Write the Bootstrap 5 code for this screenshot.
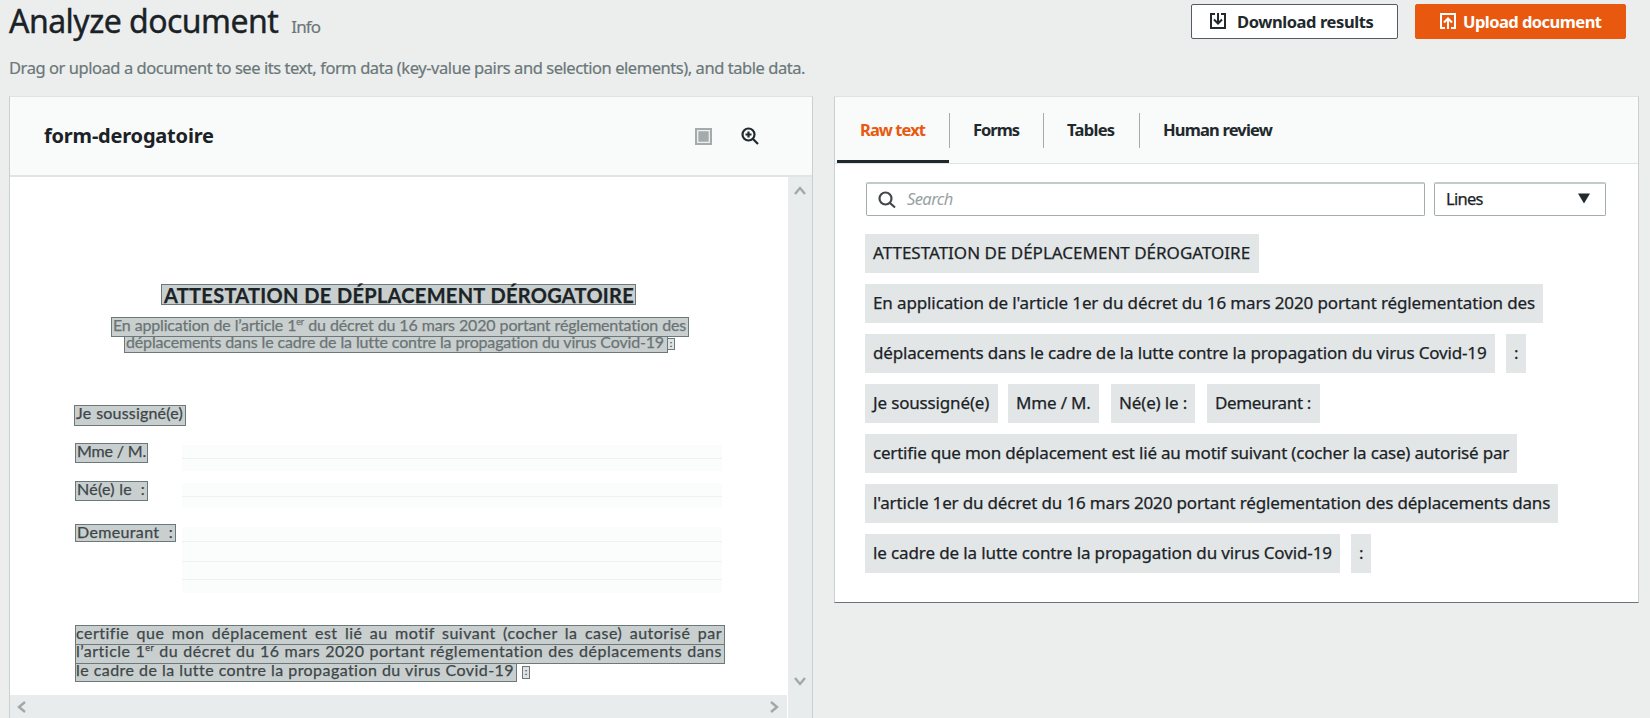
<!DOCTYPE html>
<html lang="en">
<head>
<meta charset="utf-8">
<title>Analyze document</title>
<link href="https://cdn.jsdelivr.net/npm/bootstrap@5.3.0/dist/css/bootstrap.min.css" rel="stylesheet">
<script src="https://cdn.jsdelivr.net/npm/bootstrap@5.3.0/dist/js/bootstrap.bundle.min.js"></script>
<style>
  body { background: #eceeee; color: #1b2226; font-family: "Noto Sans", sans-serif; font-size: 17px; height: 100vh; overflow: hidden; }
  .page-top { height: 54px; padding-left: 9px; padding-right: 24px; }
  .page-title { font-size: 32px; line-height: 41px; letter-spacing: -.52px; font-weight: 400; -webkit-text-stroke: .4px; }
  .info { font-size: 17px; line-height: 53px; letter-spacing: -.9px; color: #6b7778; margin-left: 13px; -webkit-text-stroke: .2px; }
  .intro { font-size: 16.5px; line-height: 26px; letter-spacing: -.445px; color: #6b7778; padding: 1px 0 0 9px; height: 42px; -webkit-text-stroke: .2px; }
  .act { height: 35px; margin-top: 4px; border-radius: 2px; font-size: 16.5px; font-weight: 700; padding: 0 0 1px; line-height: 31px; }
  .act-dl { width: 207px; background: #fff; border: 1px solid #545b64; color: #21292c; letter-spacing: -.42px; padding-left: 17px; }
  .act-up { width: 211px; background: #e8590f; border: 1px solid #e8590f; color: #fff; letter-spacing: -.54px; margin-left: 17px; padding-left: 23px; }

  .panels { gap: 21px; padding-left: 9px; }
  .panel { background: #fff; border: 1px solid #c9d0d0; border-top-color: #dfe3e3; }
  .panel-head { background: #f9fafa; border-bottom: 1px solid #e0e4e4; }
  .viewer { width: 804px; height: 622px; border-bottom: 0; }
  .viewer .panel-head { height: 80px; padding: 0 53px 0 34px; border-bottom-width: 2px; }
  .viewer h2 { font-size: 20px; font-weight: 700; letter-spacing: -.2px; line-height: 30px; }

  .canvas-col { width: 778px; }
  .scan { height: 518px; overflow: hidden; font-family: Lato, sans-serif; font-size: 16px; color: #3d4648; -webkit-text-stroke: .25px; }
  .hl { background: #c9cfcf; border: 1px solid #6d7878; line-height: 14px; white-space: nowrap; text-align: justify; text-align-last: justify; padding: 0 2px 0 1px; }
  .hl sup { font-size: 9px; line-height: 0; top: -6px; vertical-align: baseline; }
  .soft { color: #6b7475; }
  .dot { width: 8px; border: 1px solid #6d7878; background: #dfe3e3; font-size: 10px; line-height: 8px; text-align: center; color: #4c5556; }
  .scan-title { width: 475px; height: 21px; margin: 107px 0 0 151px; font-size: 20px; font-weight: 700; line-height: 20px; letter-spacing: .29px; color: #1c2326; padding-left: 2px; padding-right: 1px; }
  .sub1 { width: 578px; height: 20px; margin: 12px 0 0 101px; line-height: 13px; letter-spacing: -.19px; }
  .sub2 { width: 544px; height: 17px; line-height: 9px; letter-spacing: -.16px; padding-right: 3px; }
  .entry { margin-left: 65px; width: 647px; }
  .blank { width: 540px; margin-top: 2px; background: #fbfcfc; }
  .blank div { border-bottom: 1px solid #f0f2f2; }
  .para { width: 650px; height: 20px; margin-left: 65px; line-height: 13px; letter-spacing: .5px; padding-left: 0; }

  .hbar { height: 23px; background: #e9ecec; margin-right: 1px; padding: 0 8px 0 7px; }
  .vbar { width: 24px; height: 541px; background: #e9ecec; padding: 9px 0 32px; }

  .results { width: 805px; height: 507px; border-bottom-color: #69757a; }
  .results .panel-head { height: 67px; padding-left: 2px; }
  .tabs .nav-link { color: #21292c; font-size: 16.5px; font-weight: 700; line-height: 65px; padding: 0 23px; height: 66px; border: 0; border-bottom: 3px solid transparent; border-radius: 0; }
  .tabs .nav-link.active { color: #e8590f; border-bottom-color: #21292c; }
  .tabs .sep { width: 1px; height: 35px; background: #a3adad; margin-top: 16px; }
  .query { border: 1px solid #a3adad; border-top: 2px solid #c3caca; border-radius: 2px; height: 34px; background: #fff; font-size: 16.5px; line-height: 29px; padding-bottom: 2px; }
  .query-box { width: 559px; padding-left: 11px; }
  .query-box svg { margin-top: 2px; }
  .query-box span { font-style: italic; color: #98a1a2; margin-left: 11px; letter-spacing: -.6px; }
  .query-pick { width: 172px; padding-left: 11px; padding-right: 15px; letter-spacing: -.7px; -webkit-text-stroke: .25px; }
  .tokens { padding: 18px 0 0 30px; }
  .tok { background: #e2e6e6; height: 39px; line-height: 37px; padding-left: 8px; white-space: nowrap; letter-spacing: -.16px; -webkit-text-stroke: .25px; }
</style>
</head>
<body>
<header>
  <div class="page-top d-flex align-items-start">
    <h1 class="page-title mb-0">Analyze document</h1>
    <span class="info me-auto">Info</span>
    <button class="btn act act-dl d-flex align-items-center" type="button">
      <svg width="18" height="18" viewBox="0 0 18 18" fill="none" stroke="currentColor" stroke-width="2"><path d="M6 2H2v14h14V2h-4M9 1v10M5 7.5l4 4 4-4"/></svg>
      <span style="margin-left:10px">Download results</span>
    </button>
    <button class="btn act act-up d-flex align-items-center" type="button">
      <svg width="18" height="18" viewBox="0 0 18 18" fill="none" stroke="currentColor" stroke-width="2"><path d="M6 16H2V2h14v14h-4M9 17V7M5 10.5l4-4 4 4"/></svg>
      <span style="margin-left:6px">Upload document</span>
    </button>
  </div>
  <p class="intro mb-0">Drag or upload a document to see its text, form data (key-value pairs and selection elements), and table data.</p>
</header>

<main class="panels d-flex align-items-start">
  <section class="panel viewer flex-shrink-0">
    <div class="panel-head d-flex align-items-center">
      <h2 class="mb-0 me-auto">form-derogatoire</h2>
      <svg width="17" height="17" viewBox="0 0 17 17"><path fill="#a3abab" d="M0 0h17v17H0z"/><path fill="none" stroke="#eef0f0" stroke-width="1.3" d="M2.7 2.7h11.6v11.6H2.7z"/></svg>
      <svg style="margin-left:29px" width="18" height="18" viewBox="0 0 18 18" fill="none" stroke="#21292c" stroke-width="2.2"><circle cx="7.5" cy="7.5" r="6"/><path d="M12 12l5 5M4.5 7.5h6M7.5 4.5v6"/></svg>
    </div>
    <div class="d-flex">
      <div class="canvas-col">
        <div class="scan" lang="fr">
          <div class="hl scan-title">ATTESTATION DE DÉPLACEMENT DÉROGATOIRE</div>
          <div class="hl soft sub1">En application de l’article 1<sup>er</sup> du décret du 16 mars 2020 portant réglementation des</div>
          <div class="d-flex" style="margin:-1px 0 0 114px">
            <div class="hl soft sub2">déplacements dans le cadre de la lutte contre la propagation du virus Covid-19</div>
            <div class="dot" style="height:12px;margin:2px 0 0 -1px">:</div>
          </div>
          <div class="hl" style="width:112px;height:21px;margin:52px 0 0 64px;letter-spacing:.2px">Je soussigné(e)</div>
          <div class="entry d-flex justify-content-between align-items-start" style="margin-top:17px">
            <div class="hl" style="width:73px;height:20px;letter-spacing:-.15px">Mme / M.</div>
            <div class="blank"><div style="height:14px"></div><div class="border-0" style="height:12px"></div></div>
          </div>
          <div class="entry d-flex justify-content-between align-items-start" style="margin-top:10px">
            <div class="hl" style="width:73px;height:20px;letter-spacing:.25px">Né(e) le&nbsp; :</div>
            <div class="blank"><div style="height:14px"></div><div class="border-0" style="height:11px"></div></div>
          </div>
          <div class="entry d-flex justify-content-between align-items-start" style="margin-top:16px">
            <div class="hl" style="width:101px;height:18px;letter-spacing:.35px">Demeurant&nbsp; :</div>
            <div class="blank" style="margin-top:3px"><div style="height:15px"></div><div style="height:20px"></div><div style="height:18px"></div><div class="border-0" style="height:13px"></div></div>
          </div>
          <div class="hl para" style="margin-top:32px">certifie que mon déplacement est lié au motif suivant (cocher la case) autorisé par</div>
          <div class="hl para" style="margin-top:-1px;line-height:12px">l’article 1<sup>er</sup> du décret du 16 mars 2020 portant réglementation des déplacements dans</div>
          <div class="d-flex" style="margin-top:-1px">
            <div class="hl para" style="width:442px;height:19px;line-height:11px;letter-spacing:.44px">le cadre de la lutte contre la propagation du virus Covid-19</div>
            <div class="dot" style="height:13px;margin:3px 0 0 5px">:</div>
          </div>
        </div>
        <div class="hbar d-flex align-items-center justify-content-between">
          <svg width="9" height="12" viewBox="0 0 9 12" fill="none" stroke="#a0a9a9" stroke-width="2.4"><path d="M8 1L2 6l6 5"/></svg>
          <svg width="9" height="12" viewBox="0 0 9 12" fill="none" stroke="#a0a9a9" stroke-width="2.4"><path d="M1 1l6 5-6 5"/></svg>
        </div>
      </div>
      <div class="vbar d-flex flex-column align-items-center justify-content-between">
        <svg width="12" height="9" viewBox="0 0 12 9" fill="none" stroke="#a0a9a9" stroke-width="2.4"><path d="M1 8l5-6 5 6"/></svg>
        <svg width="12" height="9" viewBox="0 0 12 9" fill="none" stroke="#a0a9a9" stroke-width="2.4"><path d="M1 1l5 6 5-6"/></svg>
      </div>
    </div>
  </section>

  <section class="panel results flex-shrink-0">
    <div class="panel-head">
      <nav class="tabs nav flex-nowrap">
        <a class="nav-link active" href="#" style="width:112px;letter-spacing:-.94px">Raw text</a>
        <span class="sep"></span>
        <a class="nav-link" href="#" style="width:93px;letter-spacing:-1px">Forms</a>
        <span class="sep"></span>
        <a class="nav-link" href="#" style="width:95px;letter-spacing:-.7px">Tables</a>
        <span class="sep"></span>
        <a class="nav-link" href="#" style="letter-spacing:-.82px">Human review</a>
      </nav>
    </div>
    <div class="d-flex" style="gap:9px;padding:18px 0 0 31px">
      <div class="query query-box d-flex align-items-center">
        <svg width="18" height="18" viewBox="0 0 18 18" fill="none" stroke="#3f484b" stroke-width="2.2"><circle cx="7.5" cy="7.5" r="6"/><path d="M12 12l5 4.5"/></svg>
        <span>Search</span>
      </div>
      <div class="query query-pick d-flex align-items-center justify-content-between">
        Lines
        <svg width="12" height="11" viewBox="0 0 12 11"><path fill="#21292c" d="M0 .5h12L6 10.5z"/></svg>
      </div>
    </div>
    <div class="tokens d-flex flex-column" lang="fr" style="gap:11px">
      <div class="d-flex"><span class="tok" style="width:394px;letter-spacing:0">ATTESTATION DE DÉPLACEMENT DÉROGATOIRE</span></div>
      <div class="d-flex"><span class="tok" style="width:678px;letter-spacing:-.12px">En application de l'article 1er du décret du 16 mars 2020 portant réglementation des</span></div>
      <div class="d-flex" style="gap:11px"><span class="tok" style="width:630px">déplacements dans le cadre de la lutte contre la propagation du virus Covid-19</span><span class="tok" style="width:20px">:</span></div>
      <div class="d-flex">
        <span class="tok" style="width:133px">Je soussigné(e)</span>
        <span class="tok" style="width:91px;margin-left:10px">Mme / M.</span>
        <span class="tok" style="width:84px;margin-left:12px">Né(e) le :</span>
        <span class="tok" style="width:113px;margin-left:12px;letter-spacing:-.35px">Demeurant :</span>
      </div>
      <div class="d-flex"><span class="tok" style="width:652px;letter-spacing:-.2px">certifie que mon déplacement est lié au motif suivant (cocher la case) autorisé par</span></div>
      <div class="d-flex"><span class="tok" style="width:693px">l'article 1er du décret du 16 mars 2020 portant réglementation des déplacements dans</span></div>
      <div class="d-flex" style="gap:11px"><span class="tok" style="width:475px;letter-spacing:-.12px">le cadre de la lutte contre la propagation du virus Covid-19</span><span class="tok" style="width:20px">:</span></div>
    </div>
  </section>
</main>
</body>
</html>
